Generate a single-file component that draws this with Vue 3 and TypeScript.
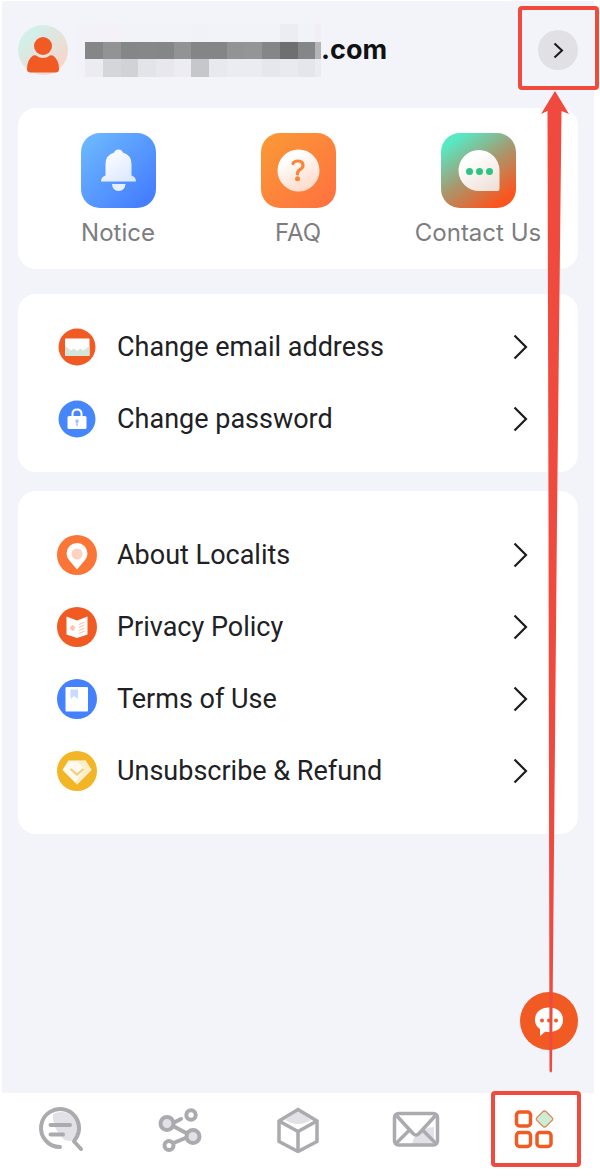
<script setup lang="ts">
interface Row {
  id: string
  label: string
}

const accountRows: Row[] = [
  { id: 'email', label: 'Change email address' },
  { id: 'password', label: 'Change password' },
]

const infoRows: Row[] = [
  { id: 'about', label: 'About Localits' },
  { id: 'privacy', label: 'Privacy Policy' },
  { id: 'terms', label: 'Terms of Use' },
  { id: 'refund', label: 'Unsubscribe & Refund' },
]

const groups = [
  { id: 'account', rows: accountRows },
  { id: 'info', rows: infoRows },
]

const shortcuts: Row[] = [
  { id: 'notice', label: 'Notice' },
  { id: 'faq', label: 'FAQ' },
  { id: 'contact', label: 'Contact Us' },
]

const tabs: Row[] = [
  { id: 'search', label: 'Search' },
  { id: 'share', label: 'Share' },
  { id: 'box', label: 'Products' },
  { id: 'mail', label: 'Messages' },
  { id: 'more', label: 'More' },
]

// Blocks that hide the private part of the address, one colour per column
const edges = [28, 81, 134, 187, 240, 293, 346, 399, 452, 505, 559, 612, 665, 718, 735]
const topRow = ['#f2f2f8', '#f4f1f7', '#f2f3f9', '#f2f3f9', '#f2f3f9', '#f2f3f9', '#f1f2f7', '#f2f3f9', '#f2f3f9', '#f2f3f9', '#f2f3f9', '#ecedf2', '#f2f3f9', '#f1eff5']
const middleRow = ['#858687', '#929394', '#858687', '#868788', '#858687', '#929394', '#848586', '#848586', '#929394', '#949596', '#858687', '#6e706f', '#858687', '#b4b5b9']
const bottomRow = ['#ecebf1', '#d5d6da', '#d1d2d6', '#e3e4ea', '#e8e7ed', '#edecf2', '#c6c7cb', '#e8e9ee', '#ebecf1', '#ebecf1', '#e6e7ec', '#e9eaef', '#e5e5eb', '#ebecf2']
const rows = [topRow, middleRow, bottomRow]
const blocks = rows.flatMap((colors, r) =>
  colors.map((fill, c) => ({
    key: `${r}-${c}`,
    x: edges[c],
    y: r * 53,
    w: edges[c + 1] - edges[c],
    fill,
  })),
)
</script>

<template>
  <div class="page">
    <div class="screen">
      <header class="profile">
        <svg class="avatar" viewBox="0 0 50 50" aria-hidden="true">
          <defs>
            <linearGradient id="avatarBg" x1="0.1" y1="0.1" x2="0.9" y2="0.9">
              <stop offset="0" stop-color="#cdf3ec" />
              <stop offset="0.5" stop-color="#e2e4de" />
              <stop offset="1" stop-color="#fbd3c8" />
            </linearGradient>
          </defs>
          <circle cx="25" cy="25" r="25" fill="url(#avatarBg)" />
          <circle cx="25" cy="21" r="9" fill="#f15a22" />
          <path d="M14.500 31 Q16 30 18 30.500 Q25 35.500 32 30.500 Q34 30 35.500 31 Q41 35 41 44 Q41 47.500 37.500 47.500 H12.500 Q9 47.500 9 44 Q9 35 14.500 31Z" fill="#f15a22" />
        </svg>
        <div class="address">
          <svg class="mask" viewBox="0 0 735 159" aria-hidden="true" shape-rendering="crispEdges">
            <rect x="0" y="0" width="28" height="159" fill="#f2f2f8" />
            <rect v-for="b in blocks" :key="b.key" :x="b.x" :y="b.y" :width="b.w" height="53" :fill="b.fill" />
          </svg>
          <span class="domain">.com</span>
        </div>
        <button class="open" type="button" aria-label="Open profile">
          <svg viewBox="0 0 40 40" aria-hidden="true">
            <path d="M16.500 13.500 L24 20.500 L16.500 27.500" fill="none" stroke="#17181a" stroke-width="2" />
          </svg>
        </button>
      </header>

      <main class="content">
        <section class="card shortcuts">
          <a v-for="s in shortcuts" :key="s.id" class="shortcut" href="#">
            <svg v-if="s.id === 'notice'" class="tile" viewBox="0 0 75 75" aria-hidden="true">
              <defs>
                <linearGradient id="blueTile" x1="0" y1="0" x2="1" y2="1">
                  <stop offset="0" stop-color="#6fbcff" />
                  <stop offset="1" stop-color="#4077ff" />
                </linearGradient>
                <linearGradient id="bellFill" x1="0.1" y1="0" x2="0.8" y2="1">
                  <stop offset="0" stop-color="#ffffff" />
                  <stop offset="1" stop-color="#dce8ff" />
                </linearGradient>
              </defs>
              <rect width="75" height="75" rx="19" fill="url(#blueTile)" />
              <path d="M37.500 16.500 Q41 16.500 41.800 19.500 Q50.500 22 50.500 31 V42.500 Q55 44 55 48.500 H20 Q20 44 24.500 42.500 V31 Q24.500 22 33.200 19.500 Q34 16.500 37.500 16.500Z" fill="url(#bellFill)" />
              <path d="M31 51 H44.500 Q44 58 37.500 58 Q31.500 58 31 51Z" fill="#e5efff" />
            </svg>
            <svg v-else-if="s.id === 'faq'" class="tile" viewBox="0 0 75 75" aria-hidden="true">
              <defs>
                <linearGradient id="orangeTile" x1="0" y1="0" x2="1" y2="1">
                  <stop offset="0" stop-color="#fa9a35" />
                  <stop offset="1" stop-color="#ff7040" />
                </linearGradient>
                <linearGradient id="faqFill" x1="0.2" y1="0" x2="0.7" y2="1">
                  <stop offset="0.2" stop-color="#ffffff" />
                  <stop offset="1" stop-color="#ffd8c6" />
                </linearGradient>
              </defs>
              <rect width="75" height="75" rx="19" fill="url(#orangeTile)" />
              <circle cx="37.500" cy="37.500" r="21" fill="url(#faqFill)" />
              <path d="M32 30.500 Q33 28 37 28 Q42 28 42 32.500 Q42 35 39 36.500 Q36.500 38 36.500 41" fill="none" stroke="#fb8438" stroke-width="3.200" stroke-linecap="round" />
              <circle cx="36.500" cy="45.800" r="2.500" fill="#fb8438" />
            </svg>
            <svg v-else class="tile" viewBox="0 0 75 75" aria-hidden="true">
              <defs>
                <linearGradient id="mixTile" x1="0.1" y1="0" x2="0.8" y2="1">
                  <stop offset="0.1" stop-color="#58e8c4" />
                  <stop offset="0.5" stop-color="#a59a70" />
                  <stop offset="0.94" stop-color="#fb551e" />
                </linearGradient>
                <linearGradient id="talkFill" x1="0.2" y1="0" x2="0.8" y2="1">
                  <stop offset="0.2" stop-color="#ffffff" />
                  <stop offset="1" stop-color="#efe0d9" />
                </linearGradient>
              </defs>
              <rect width="75" height="75" rx="19" fill="url(#mixTile)" />
              <path d="M38 17 A20.500 20.500 0 0 1 58.500 37.500 V56 Q58.500 58 56.500 58 H38 A20.500 20.500 0 0 1 38 17Z" fill="url(#talkFill)" />
              <circle cx="28.500" cy="38.500" r="3.500" fill="#2cc483" />
              <circle cx="38.500" cy="38.500" r="3.500" fill="#2cc483" />
              <circle cx="48.500" cy="38.500" r="3.500" fill="#2cc483" />
            </svg>
            <span class="caption">{{ s.label }}</span>
          </a>
        </section>

        <nav v-for="g in groups" :key="g.id" class="card list" :class="g.id">
          <a v-for="row in g.rows" :key="row.id" class="row" href="#">
            <svg class="badge" viewBox="0 0 40 40" aria-hidden="true">
              <g v-if="row.id === 'email'">
                <circle cx="20" cy="20" r="18.500" fill="#f15a22" />
                <rect x="8" y="11.500" width="24.500" height="17.500" rx="0.800" fill="#fff" />
                <path d="M8 19 L14 23.500 L17 21.500 L20.300 24 L23.500 21.500 L26.500 23.500 L32.500 19 V29 H8Z" fill="#d3e6d9" />
              </g>
              <g v-else-if="row.id === 'password'">
                <circle cx="20" cy="20" r="18.500" fill="#4686fb" />
                <path d="M15.500 18 V15 Q15.500 10.500 20 10.500 Q24.500 10.500 24.500 15 V18" fill="none" stroke="#fff" stroke-width="2" />
                <rect x="10.500" y="17" width="19" height="13" rx="1.500" fill="#fff" />
                <path d="M20 23 V27" stroke="#9fc1ff" stroke-width="1.500" />
                <circle cx="20" cy="22" r="1.800" fill="#9fc1ff" />
              </g>
              <g v-else-if="row.id === 'about'">
                <circle cx="20" cy="20" r="20" fill="#fb7537" />
                <path d="M20 34.500 L12 25 Q9.500 22 9.500 18.500 A10.500 10.500 0 0 1 30.500 18.500 Q30.500 22 28 25Z" fill="#fff" />
                <circle cx="20" cy="19" r="5.500" fill="#fdd2c1" />
              </g>
              <g v-else-if="row.id === 'privacy'">
                <circle cx="20" cy="20" r="20" fill="#f15a22" />
                <path d="M9.500 9.500 L20 13.500 L30.500 9.500 V27.500 L20 31 L9.500 27.500Z" fill="#fff" />
                <path d="M15.500 18 V24 M12.500 21 H18.500 M13.500 19 L17.500 23 M17.500 19 L13.500 23" stroke="#fac6b2" stroke-width="1.200" />
                <path d="M22 17.500 L27.500 15 M22 20.500 L27.500 18 M22 23.500 L27.500 21 M22 26.500 L27.500 24" stroke="#fac6b2" stroke-width="1.300" />
              </g>
              <g v-else-if="row.id === 'terms'">
                <circle cx="20" cy="20" r="20" fill="#4381ff" />
                <rect x="8.500" y="8" width="22.500" height="24.500" rx="1" fill="#fff" />
                <path d="M13.500 10.500 H21 V20 L17.200 17 L13.500 20Z" fill="#c9dcff" />
              </g>
              <g v-else>
                <circle cx="20" cy="20" r="20" fill="#f1b526" />
                <path d="M11.500 9.500 H28.500 L34.500 19 L20 33.500 L5.500 19Z" fill="#fffaf0" />
                <path d="M28.500 9.500 L34.500 19 L20 33.500 L18 31 Q25 24 27 17 L21 11Z" fill="#fdedc9" />
                <path d="M13.500 18 L20 23.500 L26.500 18" fill="none" stroke="#f5cd75" stroke-width="2.200" />
              </g>
            </svg>
            <span class="label">{{ row.label }}</span>
            <svg class="chevron" viewBox="0 0 15 26" aria-hidden="true">
              <path d="M1.500 1.500 L13 13 L1.500 24.500" fill="none" stroke="#1b1c1e" stroke-width="2.200" />
            </svg>
          </a>
        </nav>
      </main>

      <button class="chat" type="button" aria-label="Chat">
        <svg viewBox="0 0 58 58" aria-hidden="true">
          <path d="M29 15.500 C38 15.500 43 21 43 28 C43 35 38 40 29 40 Q27 40 25.500 39.500 L20 44 V37 Q15 34 15 28 C15 21 20 15.500 29 15.500Z" fill="#fff" />
          <circle cx="22" cy="28.500" r="2" fill="#f15a22" />
          <circle cx="29" cy="28.500" r="2" fill="#f15a22" />
          <circle cx="36" cy="28.500" r="2" fill="#f15a22" />
        </svg>
      </button>
    </div>

    <nav class="tabs" aria-label="Main">
      <a v-for="t in tabs" :key="t.id" class="tab" href="#" :aria-label="t.label">
        <svg viewBox="0 0 48 48" fill="none" stroke="#aaaaaf" stroke-width="4" stroke-linecap="round" stroke-linejoin="round" aria-hidden="true">
          <g v-if="t.id === 'search'">
            <path d="M16 9 Q27 4 37 12 Q45 23 37 35 Q28 38 24 31 Q15 22 16 9Z" fill="#e1e1e6" stroke="none" />
            <path d="M23 42 A19 19 0 1 1 40 31.500 L37 36.500 L44 44" />
            <path d="M13.500 20 H33 M13.500 29.500 H26" />
          </g>
          <g v-else-if="t.id === 'share'">
            <path d="M17 18 L25 14 M17 21 L32 29 M15 39 L32 32" />
            <circle cx="11" cy="18.500" r="6.500" fill="#e1e1e6" />
            <circle cx="37" cy="31.500" r="6.500" fill="#e1e1e6" />
            <circle cx="35" cy="10" r="4.700" fill="#fff" />
            <circle cx="13" cy="40.500" r="4.500" fill="#fff" />
          </g>
          <g v-else-if="t.id === 'box'" stroke-linejoin="miter" stroke-width="3.500">
            <path d="M11 15 L24 6 L37 15 Q24 23 11 15Z" fill="#e1e1e6" stroke="none" />
            <path d="M24 4.500 L43 16 V36.500 L24 46.500 L5 36.500 V16Z M5 16 L24 26.500 L43 16 M24 26.500 V46.500" />
          </g>
          <g v-else-if="t.id === 'mail'" stroke-width="3.500">
            <path d="M20 41 Q21 24 42 22 V41Z" fill="#e1e1e6" stroke="none" />
            <rect x="2.500" y="8.500" width="43" height="31.500" rx="4" />
            <path d="M4 10 L21 28.500 Q24 31.500 27 28.500 L44 10 M4 38.500 L17 25.500 M44 38.500 L31 25.500" />
          </g>
          <g v-else stroke="#f15a22" stroke-width="3.500">
            <rect x="5.500" y="7" width="14" height="14" rx="3" />
            <rect x="5.500" y="27.500" width="14" height="14" rx="3" />
            <rect x="26" y="27.500" width="14" height="14" rx="3" />
            <path d="M31.500 7 Q33.500 5 35.500 7 L41 12.500 Q42.500 14 41 15.500 L35.500 21 Q33.500 23 31.500 21 L26 15.500 Q24.500 14 26 12.500Z" fill="#cdeed4" stroke="#d98b62" stroke-width="1.200" />
          </g>
        </svg>
      </a>
    </nav>

    <svg class="guide" viewBox="0 0 112 1176" aria-hidden="true">
      <g fill="none" stroke="#f04a3e" stroke-width="4">
        <rect x="32" y="8" width="77" height="80" rx="2" />
        <rect x="5" y="1093" width="86" height="72" rx="2" />
      </g>
      <path d="M67 91 L81 114 L73.500 111 L69 520 L64 1071 Q63 1074 61.500 1071 L60.500 520 L59.500 111 L53 114Z" fill="#f04a3e" />
    </svg>
  </div>
</template>

<style>
body {
  margin: 0;
  background: #fff;
}
</style>

<style scoped>
* {
  box-sizing: border-box;
}

a {
  color: inherit;
  text-decoration: none;
}

svg {
  display: block;
}

button {
  padding: 0;
  border: 0;
  cursor: pointer;
}

.page {
  position: relative;
  display: flex;
  flex-direction: column;
  min-height: 100vh;
  padding: 1px 6px 0 2px;
  background: #fff;
  font-family: Roboto, sans-serif;
  color: #202124;
}

.screen {
  position: relative;
  flex: 1;
  padding: 0 16px 40px;
  background: #f2f4fa;
}

.profile {
  display: flex;
  align-items: center;
  height: 98px;
}

.avatar {
  width: 50px;
  height: 50px;
}

.address {
  display: flex;
  flex: 1;
  align-items: center;
  margin-left: 8px;
}

.mask {
  width: 245px;
  height: 53px;
}

.domain {
  font-family: Inter, sans-serif;
  font-size: 27px;
  font-weight: 700;
  line-height: 32px;
  color: #111;
}

.open {
  width: 40px;
  height: 40px;
  border-radius: 50%;
  background: #e1e0e5;
}

.content {
  display: flex;
  flex-direction: column;
  padding-top: 9px;
}

.card {
  border-radius: 18px;
  background: #fff;
}

.shortcuts {
  display: grid;
  grid-template-columns: repeat(3, 1fr);
  padding: 25px 10px 20px;
}

.shortcut {
  display: flex;
  flex-direction: column;
  align-items: center;
  gap: 8px;
}

.tile {
  width: 75px;
  height: 75px;
}

.caption {
  font-family: Inter, sans-serif;
  font-size: 24px;
  font-weight: 400;
  line-height: 33px;
  color: #7d7d80;
}

.account {
  margin-top: 25px;
  padding: 17px 0;
}

.info {
  margin-top: 19px;
  padding: 28px 0 27px;
}

.row {
  display: flex;
  align-items: center;
  gap: 20px;
  height: 72px;
  padding: 0 50px 0 39px;
}

.badge {
  width: 40px;
  height: 40px;
}

.label {
  flex: 1;
  font-size: 27px;
  line-height: 36px;
}

.chevron {
  width: 15px;
  height: 26px;
}

.chat {
  position: absolute;
  right: 16px;
  bottom: 43px;
  width: 58px;
  height: 58px;
  border-radius: 50%;
  background: #f15a22;
}

.tabs {
  display: grid;
  grid-template-columns: repeat(5, 1fr);
  height: 83px;
  padding-top: 12px;
}

.tab {
  display: flex;
  justify-content: center;
}

.tab svg {
  width: 48px;
  height: 48px;
}

.guide {
  position: absolute;
  top: 0;
  right: 0;
  width: 112px;
  height: 1176px;
  pointer-events: none;
}
</style>
